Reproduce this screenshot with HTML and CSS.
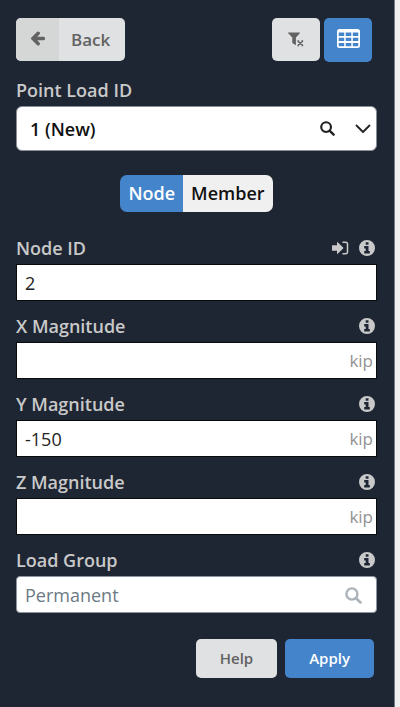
FILE: index.html
```html
<!DOCTYPE html>
<html lang="en">
<head>
<meta charset="utf-8">
<meta name="viewport" content="width=device-width, initial-scale=1">
<title>Point Load</title>
<link rel="stylesheet" href="styles.css">
</head>
<body>
<svg class="sprite" aria-hidden="true">
  <symbol id="info" viewBox="0 0 16 16">
    <path fill-rule="evenodd" d="M8 0a8 8 0 1 0 0 16A8 8 0 0 0 8 0ZM6.700 2.200h2.800v2.500H6.700ZM5.200 6.100h4.300v5h1.300v2.300H5.200v-2.300h1.500V8.400H5.200Z"/>
  </symbol>
  <symbol id="search" viewBox="0 0 16 16">
    <circle cx="6.500" cy="6.500" r="5.200" fill="none" stroke="currentColor" stroke-width="2.300"/>
    <path d="m10.500 10.500 4 4" fill="none" stroke="currentColor" stroke-width="2.600" stroke-linecap="round"/>
  </symbol>
</svg>
<form class="panel">
  <header class="toolbar">
    <button type="button" class="btn back">
      <span class="back-icon"><svg width="14" height="15" viewBox="0 0 14 15"><path d="M7.200 2.200 2 7.500l5.200 5.300M2.500 7.500H12.400" fill="none" stroke="currentColor" stroke-width="3.400" stroke-linecap="round" stroke-linejoin="miter"/></svg></span>
      <span class="back-text">Back</span>
    </button>
    <div class="tools">
      <button type="button" class="btn tool" aria-label="Clear filter">
        <svg width="16" height="15" viewBox="0 0 16 15"><path d="M.4.5h11.200c.4 0 .5.500.2.800L7.900 5.600v7.600L4.300 11V5.600L.2 1.300C0 1 0 .500.400.500Z" fill="currentColor"/><path d="m10 9.200 4.600 4.200M14.600 9.200 10 13.400M9.400 8.900h1.800M13.400 8.900h1.800M9.400 13.600h1.800M13.400 13.600h1.800" fill="none" stroke="currentColor" stroke-width="1.500"/></svg>
      </button>
      <button type="button" class="btn tool primary" aria-label="Table">
        <svg width="23" height="20" viewBox="0 0 23 20"><path fill="currentColor" fill-rule="evenodd" d="M2.500 0h18A2.500 2.500 0 0 1 23 2.500v14A2.500 2.500 0 0 1 20.500 19h-18A2.500 2.500 0 0 1 0 16.500v-14A2.500 2.500 0 0 1 2.500 0ZM1.700 3.500v3.400h5.500V3.500ZM8.700 3.500v3.400h5.600V3.500ZM15.800 3.500v3.400h5.500V3.500ZM1.700 8.700v3.400h5.500V8.700ZM8.700 8.700v3.400h5.600V8.700ZM15.800 8.700v3.400h5.500V8.700ZM1.700 13.900v2.600q0 .8.800.8h4.700v-3.400ZM8.700 13.900v3.400h5.600v-3.400ZM15.800 13.900v3.400h4.700q.8 0 .8-.8v-2.600Z"/></svg>
      </button>
    </div>
  </header>

  <div class="field">
    <div class="label-row"><label for="load-id">Point Load ID</label></div>
    <div class="control">
      <select id="load-id" class="picker"><option>1 (New)</option></select>
      <span class="picker-icons">
        <svg width="15" height="15"><use href="#search"/></svg>
        <svg width="16" height="10" viewBox="0 0 16 10"><path d="m1.500 1.500 6.500 6.500 6.500-6.500" fill="none" stroke="currentColor" stroke-width="1.800" stroke-linecap="round" stroke-linejoin="round"/></svg>
      </span>
    </div>
  </div>

  <div class="toggle" role="group" aria-label="Load target">
    <button type="button" class="seg active" aria-pressed="true">Node</button>
    <button type="button" class="seg" aria-pressed="false">Member</button>
  </div>

  <div class="fields">
    <div class="field">
      <div class="label-row">
        <label for="node">Node ID</label>
        <span class="hints">
          <svg width="17" height="14" viewBox="0 0 17 14"><path d="M.6 4.200H5V1.400q0-.8.700-.2l5.400 5.200q.6.600 0 1.200l-5.400 5.200q-.7.600-.7-.2V9.800H.6Q0 9.800 0 9.200V4.800q0-.6.600-.6Z" fill="currentColor"/><path d="M10.500 1.200h3q2 0 2 2v7.600q0 2-2 2h-3" fill="none" stroke="currentColor" stroke-width="1.500"/></svg>
          <svg class="info" width="16" height="16"><use href="#info"/></svg>
        </span>
      </div>
      <input id="node" class="text" type="text" value="2">
    </div>
    <div class="field">
      <div class="label-row"><label for="mag-x">X Magnitude</label><svg class="info" width="16" height="16"><use href="#info"/></svg></div>
      <div class="control"><input id="mag-x" class="text" type="text"><span class="unit">kip</span></div>
    </div>
    <div class="field">
      <div class="label-row"><label for="mag-y">Y Magnitude</label><svg class="info" width="16" height="16"><use href="#info"/></svg></div>
      <div class="control"><input id="mag-y" class="text" type="text" value="-150"><span class="unit">kip</span></div>
    </div>
    <div class="field">
      <div class="label-row"><label for="mag-z">Z Magnitude</label><svg class="info" width="16" height="16"><use href="#info"/></svg></div>
      <div class="control"><input id="mag-z" class="text" type="text"><span class="unit">kip</span></div>
    </div>
    <div class="field">
      <div class="label-row"><label for="group">Load Group</label><svg class="info" width="16" height="16"><use href="#info"/></svg></div>
      <div class="control"><input id="group" class="text lookup" type="text" placeholder="Permanent"><span class="lookup-icon"><svg width="17" height="17"><use href="#search"/></svg></span></div>
    </div>
  </div>

  <footer class="actions">
    <button type="button" class="btn help">Help</button>
    <button type="submit" class="btn primary apply">Apply</button>
  </footer>
</form>
</body>
</html>
```

FILE: styles.css
```css
* {
  box-sizing: border-box;
}

body {
  margin: 0;
  min-height: 100vh;
  display: flex;
  background: #f0f0f0;
  color: #c9c9c9;
  font-family: "Open Sans", sans-serif;
  font-size: 18px;
  line-height: 24px;
}

button,
input,
select {
  margin: 0;
  font: inherit;
}

svg {
  display: block;
  flex: none;
}

.sprite {
  position: absolute;
  width: 0;
  height: 0;
}

.panel {
  flex: 1;
  min-width: 0;
  margin-right: 5px;
  padding: 18px 17px 28px 16px;
  border-right: 1px solid #777c83;
  background: #1f2633;
}

.toolbar {
  display: flex;
  justify-content: space-between;
  margin-bottom: 16px;
  padding-right: 5px;
}

.tools {
  display: flex;
  gap: 4px;
}

.btn {
  display: flex;
  align-items: center;
  justify-content: center;
  padding: 0;
  border: 0;
  border-radius: 5px;
  background: #e0e1e2;
  color: #626262;
  font-size: 15px;
  font-weight: 600;
}

.btn.primary {
  background: #4484cb;
  color: #fff;
}

.btn.back {
  height: 43px;
  overflow: hidden;
  align-items: stretch;
  font-size: 17px;
}

.back-icon {
  display: flex;
  align-items: center;
  padding: 0 14px 2px 15px;
  background: #d5d6d6;
}

.back-text {
  display: flex;
  align-items: center;
  padding: 0 15px 0 12px;
}

.tool {
  width: 48px;
  height: 43px;
}

.tool.primary {
  height: 44px;
  padding-bottom: 2px;
}

.label-row {
  display: flex;
  align-items: center;
  justify-content: space-between;
  margin-bottom: 4px;
  padding-right: 2px;
  font-weight: 600;
}

.hints {
  display: flex;
  align-items: center;
  gap: 10px;
}

.info {
  fill: currentColor;
}

.control {
  position: relative;
}

.picker {
  display: block;
  width: 100%;
  height: 45px;
  padding: 0 80px 0 13px;
  appearance: none;
  border: 1px solid #8b8e95;
  border-radius: 6px;
  background: #fff;
  color: #111;
  font-weight: 600;
}

.picker-icons {
  position: absolute;
  inset: 0 6px 0 auto;
  display: flex;
  align-items: center;
  gap: 20px;
  color: #222;
  pointer-events: none;
}

.toggle {
  display: flex;
  width: fit-content;
  margin: 24px auto;
  overflow: hidden;
  border-radius: 7px;
}

.seg {
  height: 37px;
  padding: 0 8px 1px;
  border: 0;
  background: #f0f0f0;
  color: #111;
  font-weight: 600;
}

.seg.active {
  background: #4484cb;
  color: #fff;
}

.fields {
  display: grid;
  gap: 13px;
}

.text {
  display: block;
  width: 100%;
  height: 37px;
  padding: 0 8px;
  border: 1px solid #080a0e;
  background: #fff;
  color: #222;
}

.unit {
  position: absolute;
  inset: 0 4px 0 auto;
  display: flex;
  align-items: center;
  color: #929292;
  font-size: 17px;
}

.lookup {
  padding-right: 40px;
  border-color: #8d949c;
  border-radius: 4px;
}

.lookup::placeholder {
  color: #6c7a84;
  opacity: 1;
}

.lookup-icon {
  position: absolute;
  inset: 2px 15px 0 auto;
  display: flex;
  align-items: center;
  color: #adb4b9;
  pointer-events: none;
}

.actions {
  display: flex;
  justify-content: flex-end;
  gap: 8px;
  margin-top: 26px;
  padding-right: 3px;
}

.help,
.apply {
  height: 39px;
  padding: 0 24px 1px;
}
```
